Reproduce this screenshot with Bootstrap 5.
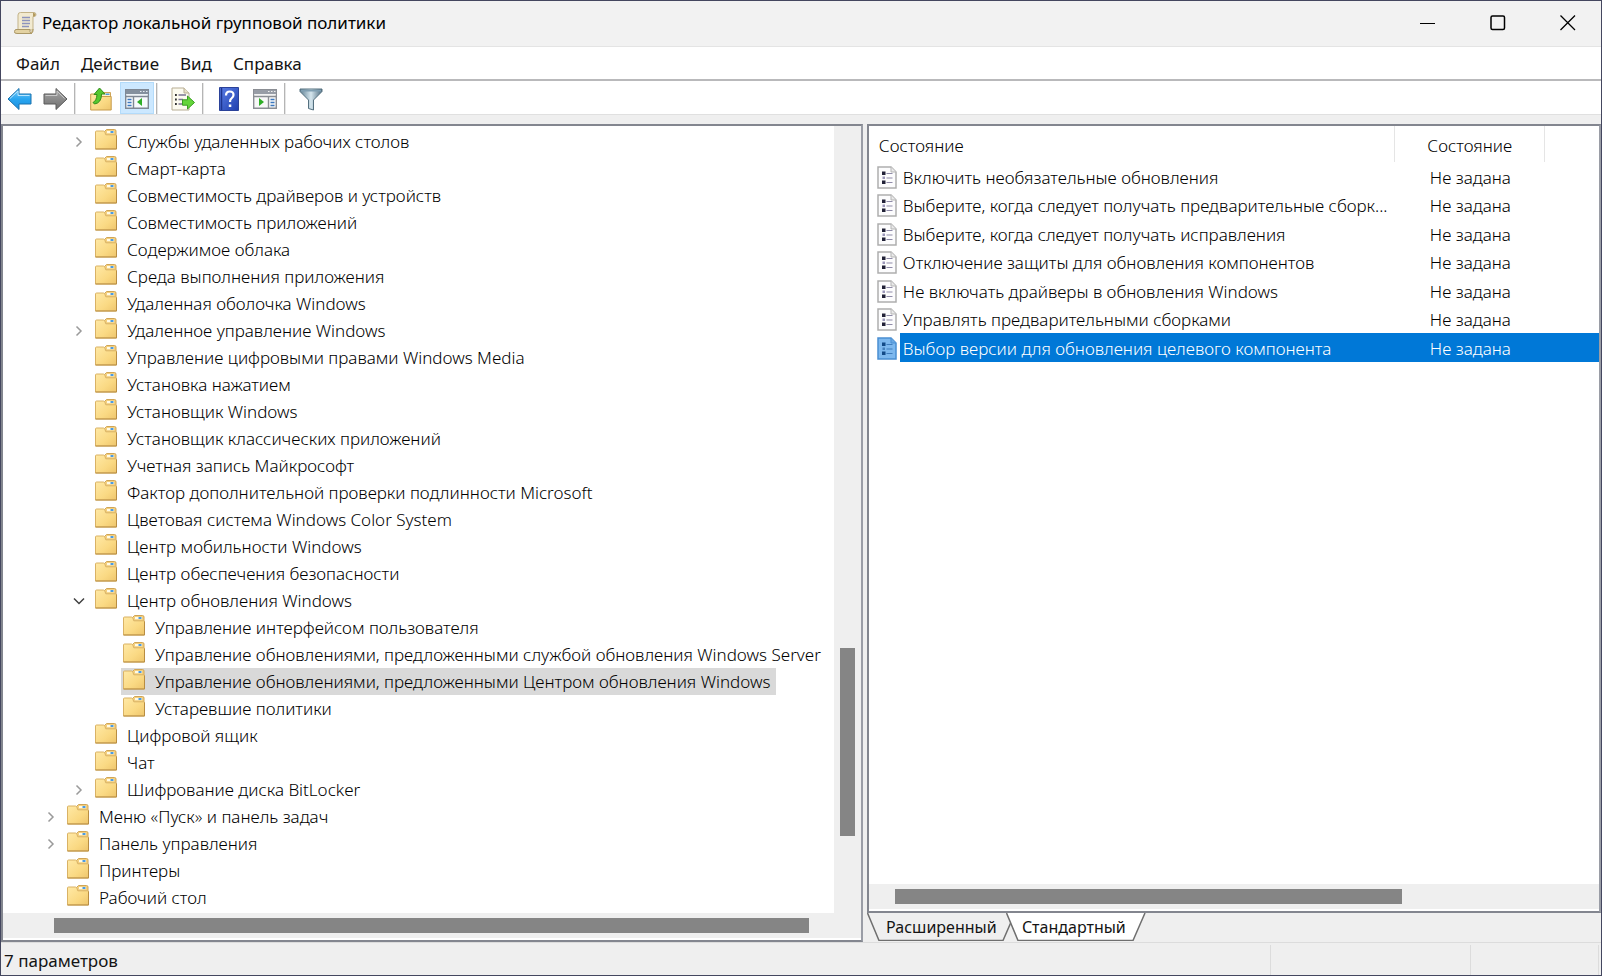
<!DOCTYPE html>
<html lang="ru">
<head>
<meta charset="utf-8">
<meta name="viewport" content="width=device-width, initial-scale=1">
<title>Редактор локальной групповой политики</title>
<link href="https://cdn.jsdelivr.net/npm/bootstrap@5.3.0/dist/css/bootstrap.min.css" rel="stylesheet">
<style>
  body { font-family: "Noto Sans", "Open Sans", sans-serif; font-size: 17px; line-height: 27px; color: #141414; }
  a, a:hover { color: inherit; text-decoration: none; }
  svg { display: block; flex: none; }
  button { border: 0; background: none; padding: 0; color: inherit; }
  .mmc { height: 100vh; background: #efefef; border: 1px solid #44475f; overflow: hidden; }
  .titlebar { height: 46px; background: #f2f2f2; border-bottom: 1px solid #e4e4e4; padding: 0 0 2px 12px; gap: 5px; }
  .titlebar h1 { font-size: 17px; line-height: 27px; font-weight: 400; color: #000; }
  .winbtn { width: 70px; height: 44px; padding-left: 3px; }
  .menubar { height: 34px; padding-left: 15px; gap: 21px; border-bottom: 2px solid #b9b9bb; }
  .tools { height: 34px; padding-left: 1px; gap: 2px; border-bottom: 1px solid #e0e0e0; }
  .tool { width: 34px; height: 32px; padding-top: 2px; display: flex; align-items: center; justify-content: center; }
  .tool.on { background: #cce8ff; border: 1px solid #b3dbfa; }
  .rule { width: 2px; height: 31px; margin-right: 6px; background: #b5b5b5; border-right: 1px solid #e6e6e6; }
  .panes { padding-top: 9px; gap: 4px; }
  .frame { border: 2px solid #83868f; border-color: #83868f #9a9da6 #83868f #83868f; background: #fff; }
  .treepane { flex: 860 1 0; }
  .listpane { flex: 736 1 0; }
  .tree { padding: 2px 0 0 34px; font-weight: 350; color: #000; }
  .tree ul { padding-left: 28px; }
  .tree .item { display: flex; height: 27px; white-space: nowrap; }
  .slot { width: 28px; height: 27px; display: flex; align-items: center; justify-content: center; flex: none; }
  .node { display: flex; align-items: center; gap: 10px; padding: 0 6px 0 2px; }
  .node svg { margin-bottom: 4px; }
  .node.sel { background: #d9d9d9; }
  .track { background: #efefef; }
  .vtrack { width: 27px; padding: 0 6px; }
  .htrack { height: 25px; padding: 5px 0; margin-bottom: 2px; }
  .thumb { background: #858585; }
  .policies { table-layout: fixed; width: 100%; font-weight: 320; color: #000; }
  .policies th { font-weight: 350; height: 36px; padding: 2px 0 0 10px; }
  .policies td { padding: 1px 0 0; height: 28px; line-height: 27px; white-space: nowrap; overflow: hidden; }
  .policies tbody tr:nth-child(odd) td { height: 29px; }
  .policies td:nth-child(1) { padding-left: 8px; }
  .policies td:nth-child(2) { padding-left: 3px; }
  .policies td:nth-child(3) { padding-left: 35px; }
  .policies th:nth-child(2) { padding-left: 32px; }
  .policies th { border-right: 1px solid #e5e5e5; }
  .policies tr.chosen td:nth-child(n+2) { background: #0078d7; color: #fff; }
  .c-icon { width: 31px; } .c-name { width: 495px; } .c-state { width: 150px; }
  .sheets { height: 29px; font-size: 16px; }
  .sheet { height: 28px; position: relative; text-align: center; flex: none; width: 139px; }
  .sheet svg { position: absolute; left: 0; top: 0; }
  .sheet span { position: relative; }
  .sheet.first { padding-left: 10px; }
  .sheet.second { padding-right: 3px; }
  .status { height: 33px; border-top: 1px solid #dcdcdc; line-height: 31px; }
  .status .part { border-right: 1px solid #dcdcdc; margin-top: 2px; }
  .status .part:first-child { padding-left: 3px; }
  .grip { width: 2px; }
</style>
</head>
<body>
<svg width="0" height="0" class="position-absolute" aria-hidden="true">
  <defs>
    <linearGradient id="gf" x1="0" y1="0" x2="1" y2="1"><stop offset="0" stop-color="#ffe9a6"/><stop offset=".6" stop-color="#fad983"/><stop offset="1" stop-color="#eec56c"/></linearGradient>
    <linearGradient id="gb" x1="0" y1="0" x2="0" y2="1"><stop offset="0" stop-color="#7fd0fa"/><stop offset=".5" stop-color="#29a6f0"/><stop offset="1" stop-color="#1b8fe0"/></linearGradient>
    <linearGradient id="gg" x1="0" y1="0" x2="0" y2="1"><stop offset="0" stop-color="#a8a8a8"/><stop offset="1" stop-color="#6e6e6e"/></linearGradient>
    <linearGradient id="gq" x1="0" y1="0" x2="1" y2="1"><stop offset="0" stop-color="#5b7fe6"/><stop offset="1" stop-color="#1f3fae"/></linearGradient>
    <linearGradient id="gn" x1="0" y1="0" x2="1" y2="0"><stop offset="0" stop-color="#5f7f92"/><stop offset=".5" stop-color="#d5e6ee"/><stop offset="1" stop-color="#4e6c80"/></linearGradient>
    <symbol id="folder" viewBox="0 0 22 21">
      <path d="M9.500 5V2.500L11.500.5h8q1.500 0 1.500 1.500v8H9.500z" fill="#f3cf7f" stroke="#d0a556"/>
      <path d="M12 2h7v2.200h-7z" fill="#fffbe8"/><path d="M15.500 2h3v2h-3z" fill="#4c9be0"/>
      <path d="M.5 3q0-1 1-1h7q1 0 1.500 1.500l.8 2.300H20.500q1 0 1 1V20H.5z" fill="url(#gf)" stroke="#d9b265"/>
      <path d="M.5 20h21M21.500 6.500V20" stroke="#b88d42" fill="none"/>
    </symbol>
    <symbol id="closed" viewBox="0 0 8 12"><path d="M1.500 1.500 6 6 1.500 10.500" fill="none" stroke="#9a9a9a" stroke-width="1.500"/></symbol>
    <symbol id="policy" viewBox="0 0 20 23">
      <path d="M1 1h13l5 5v16H1z" fill="#fcfcfd" stroke="#aeaeae" stroke-width="1.500"/>
      <path d="M14 1v5h5" fill="#e9e9e9" stroke="#b5b5b5"/>
      <path d="M5 5.500h3.500V9H5zM5 14.500h3.500V18H5z" fill="#222238"/><path d="M5.500 10.500H8V13H5.500z" fill="#9a96b8"/>
      <path d="M9.500 7.500h6M9.500 12h6M9.500 16.500h6" stroke="#8f8ba8"/>
    </symbol>
  </defs>
</svg>

<div class="mmc d-flex flex-column">
  <header class="titlebar d-flex align-items-center flex-shrink-0">
    <svg width="24" height="24" viewBox="0 0 24 24"><path d="M5 4q0-2.500 2.500-2.500H21q2 0 2 2.300 0 1.700-2 1.700h-1V19H5z" fill="#f2ead0" stroke="#c3b389"/><path d="M20 5.500q2.500.3 2.500-2Q22 1.500 20 2z" fill="#b39a5e"/><path d="M9 6.500h8M9 9.500h8M9 12.500h8M9 15.500h7" stroke="#8d93bd" stroke-width="1.300"/><path d="M3 18.500h14q-1 3.500 2 4H4q-3 0-2.500-2 .3-2 1.500-2z" fill="#e3d2a2" stroke="#ab9868"/><path d="M17 22.500q3.500 0 3-4.500" fill="#cbb67e" stroke="#ab9868"/></svg>
    <h1 class="m-0 me-auto">Редактор локальной групповой политики</h1>
    <div class="d-flex">
      <button class="winbtn" aria-label="Свернуть"><svg class="mx-auto" width="16" height="16"><path d="M0 8.500h15" stroke="#000"/></svg></button>
      <button class="winbtn" aria-label="Развернуть"><svg class="mx-auto" width="16" height="16"><rect x="1" y="1" width="13.500" height="13.500" rx="1.500" fill="none" stroke="#000" stroke-width="1.500"/></svg></button>
      <button class="winbtn" aria-label="Закрыть"><svg class="mx-auto" width="16" height="16"><path d="M.5.5l14.500 14.500M15 .5L.5 15" stroke="#000" stroke-width="1.300"/></svg></button>
    </div>
  </header>

  <nav class="menubar d-flex align-items-center bg-white flex-shrink-0">
    <button>Файл</button><button>Действие</button><button>Вид</button><button>Справка</button>
  </nav>

  <div class="tools d-flex align-items-end bg-white flex-shrink-0" role="toolbar" aria-label="Инструменты">
    <button class="tool" aria-label="Назад"><svg width="25" height="24" viewBox="0 0 25 24"><path d="M1 12 12 1.500V7h12v10H12v5.500z" fill="url(#gb)" stroke="#1a72ae"/><path d="M3 11.500 11 4v4.500h11.500" fill="none" stroke="#b8e6ff"/></svg></button>
    <button class="tool" aria-label="Вперед"><svg width="25" height="24" viewBox="0 0 25 24"><path d="M24 12 13 1.500V7H1v10h12v5.500z" fill="url(#gg)" stroke="#5b5b5b"/><path d="M2.500 8.500H14V4l7.500 7.500" fill="none" stroke="#c9c9c9"/></svg></button>
    <span class="rule"></span>
    <button class="tool" aria-label="Вверх"><svg width="22" height="24" viewBox="0 0 22 24"><path d="M11 8V5.500h9.500V10H11z" fill="#fff3c8" stroke="#d0a556"/><path d="M15.500 6.500h4v1.500h-4z" fill="#4c9be0"/><path d="M.7 7h7l2.500 2.500h11V23H.7z" fill="url(#gf)" stroke="#c79c4c"/><path d="M3 15.500q3.500-1.500 4-8H4L9.500 1l5.500 6h-3.500q0 9-7 10z" fill="#55c82f" stroke="#318d1a"/></svg></button>
    <button class="tool on" aria-label="Дерево консоли"><svg width="24" height="20" viewBox="0 0 24 20"><path d="M.7.7h22.600v18.600H.7z" fill="#f7fafc" stroke="#7f8894" stroke-width="1.400"/><path d="M1 1h22v4H1z" fill="#84909e"/><path d="M15 2.500h1.500M18 2.500h1.500M21 2.500h1.500M1 5.800h22" stroke="#e6edf3"/><path d="M8.500 7v12M1 7.500h22" stroke="#7f8894" stroke-width="1.400"/><path d="M2.500 10.500h4M2.500 13.500h4M2.500 16.500h4" stroke="#3b78c0" stroke-width="1.500"/><path d="M17 9v8l-5-4z" fill="#2fae27"/></svg></button>
    <span class="rule"></span>
    <button class="tool" aria-label="Экспорт списка"><svg width="24" height="24" viewBox="0 0 24 24"><path d="M1 1h12l5 5v17H1z" fill="#fcfaef" stroke="#b7ad94"/><path d="M13 1v5h5" fill="#e8e1c8" stroke="#b7ad94"/><path d="M4 8h1.800M4 12.500h1.800M4 17h1.800" stroke="#333" stroke-width="1.800"/><path d="M7.500 8H15M7.500 12.500H12M7.500 17H12" stroke="#7a7492" stroke-width="1.300"/><path d="M11.500 12.800h5V9l7 6.500-7 6.500v-3.800h-5z" fill="#64d53a" stroke="#3a9d22"/></svg></button>
    <span class="rule"></span>
    <button class="tool" aria-label="Справка"><svg width="20" height="24" viewBox="0 0 20 24"><path d="M.5.5h19v23H.5z" fill="url(#gq)" stroke="#2b4299"/><path d="M2.500 1v22" stroke="#1e358f" stroke-width="1.500"/><path d="M7 8.500q0-4 3.800-4 3.700 0 3.700 3.400 0 2-2 3.400-1.500 1-1.500 3.700" fill="none" stroke="#fff" stroke-width="2.200"/><path d="M9.800 17.500h2.500v2.500H9.800z" fill="#fff"/></svg></button>
    <button class="tool" aria-label="Панель действий"><svg width="24" height="20" viewBox="0 0 24 20"><path d="M.7.7h22.600v18.600H.7z" fill="#f8f8f8" stroke="#8b8e94" stroke-width="1.400"/><path d="M1 1h22v4H1z" fill="#989da6"/><path d="M15 2.500h1.500M18 2.500h1.500M21 2.500h1.500M1 5.800h22" stroke="#f0f0f0"/><path d="M15.500 7v12M1 7.500h22" stroke="#8b8e94" stroke-width="1.400"/><path d="M17.500 10.500h4M17.500 13.500h4M17.500 16.500h4" stroke="#3b78c0" stroke-width="1.500"/><path d="M6 9v8l5-4z" fill="#2fae27"/></svg></button>
    <span class="rule"></span>
    <button class="tool" aria-label="Фильтр"><svg width="24" height="23" viewBox="0 0 24 23"><path d="M1 1h22v2.500L14.500 12v10l-5-1.500V12L1 3.500z" fill="url(#gn)" stroke="#54707f"/><path d="M2 1.800h20v1.700H2z" fill="#7f9fb2"/></svg></button>
  </div>

  <main class="panes d-flex flex-grow-1">
    <section class="treepane frame d-flex flex-column overflow-hidden">
      <div class="d-flex flex-grow-1 overflow-hidden">
        <ul class="tree list-unstyled m-0 flex-grow-1 overflow-hidden">
          <li><ul class="list-unstyled">
            <li class="item"><span class="slot"><svg width="8" height="12"><use href="#closed"/></svg></span><a class="node" href="#"><svg width="22" height="21"><use href="#folder"/></svg>Службы удаленных рабочих столов</a></li>
            <li class="item"><span class="slot"></span><a class="node" href="#"><svg width="22" height="21"><use href="#folder"/></svg>Смарт-карта</a></li>
            <li class="item"><span class="slot"></span><a class="node" href="#"><svg width="22" height="21"><use href="#folder"/></svg>Совместимость драйверов и устройств</a></li>
            <li class="item"><span class="slot"></span><a class="node" href="#"><svg width="22" height="21"><use href="#folder"/></svg>Совместимость приложений</a></li>
            <li class="item"><span class="slot"></span><a class="node" href="#"><svg width="22" height="21"><use href="#folder"/></svg>Содержимое облака</a></li>
            <li class="item"><span class="slot"></span><a class="node" href="#"><svg width="22" height="21"><use href="#folder"/></svg>Среда выполнения приложения</a></li>
            <li class="item"><span class="slot"></span><a class="node" href="#"><svg width="22" height="21"><use href="#folder"/></svg>Удаленная оболочка Windows</a></li>
            <li class="item"><span class="slot"><svg width="8" height="12"><use href="#closed"/></svg></span><a class="node" href="#"><svg width="22" height="21"><use href="#folder"/></svg>Удаленное управление Windows</a></li>
            <li class="item"><span class="slot"></span><a class="node" href="#"><svg width="22" height="21"><use href="#folder"/></svg>Управление цифровыми правами Windows Media</a></li>
            <li class="item"><span class="slot"></span><a class="node" href="#"><svg width="22" height="21"><use href="#folder"/></svg>Установка нажатием</a></li>
            <li class="item"><span class="slot"></span><a class="node" href="#"><svg width="22" height="21"><use href="#folder"/></svg>Установщик Windows</a></li>
            <li class="item"><span class="slot"></span><a class="node" href="#"><svg width="22" height="21"><use href="#folder"/></svg>Установщик классических приложений</a></li>
            <li class="item"><span class="slot"></span><a class="node" href="#"><svg width="22" height="21"><use href="#folder"/></svg>Учетная запись Майкрософт</a></li>
            <li class="item"><span class="slot"></span><a class="node" href="#"><svg width="22" height="21"><use href="#folder"/></svg>Фактор дополнительной проверки подлинности Microsoft</a></li>
            <li class="item"><span class="slot"></span><a class="node" href="#"><svg width="22" height="21"><use href="#folder"/></svg>Цветовая система Windows Color System</a></li>
            <li class="item"><span class="slot"></span><a class="node" href="#"><svg width="22" height="21"><use href="#folder"/></svg>Центр мобильности Windows</a></li>
            <li class="item"><span class="slot"></span><a class="node" href="#"><svg width="22" height="21"><use href="#folder"/></svg>Центр обеспечения безопасности</a></li>
            <li><div class="item"><span class="slot"><svg width="12" height="8" viewBox="0 0 12 8"><path d="M1 1.500 6 6.500 11 1.500" fill="none" stroke="#404040" stroke-width="1.500"/></svg></span><a class="node" href="#"><svg width="22" height="21"><use href="#folder"/></svg>Центр обновления Windows</a></div>
              <ul class="list-unstyled">
                <li class="item"><span class="slot"></span><a class="node" href="#"><svg width="22" height="21"><use href="#folder"/></svg>Управление интерфейсом пользователя</a></li>
                <li class="item"><span class="slot"></span><a class="node" href="#"><svg width="22" height="21"><use href="#folder"/></svg>Управление обновлениями, предложенными службой обновления Windows Server</a></li>
                <li class="item"><span class="slot"></span><a class="node sel" href="#"><svg width="22" height="21"><use href="#folder"/></svg>Управление обновлениями, предложенными Центром обновления Windows</a></li>
                <li class="item"><span class="slot"></span><a class="node" href="#"><svg width="22" height="21"><use href="#folder"/></svg>Устаревшие политики</a></li>
              </ul></li>
            <li class="item"><span class="slot"></span><a class="node" href="#"><svg width="22" height="21"><use href="#folder"/></svg>Цифровой ящик</a></li>
            <li class="item"><span class="slot"></span><a class="node" href="#"><svg width="22" height="21"><use href="#folder"/></svg>Чат</a></li>
            <li class="item"><span class="slot"><svg width="8" height="12"><use href="#closed"/></svg></span><a class="node" href="#"><svg width="22" height="21"><use href="#folder"/></svg>Шифрование диска BitLocker</a></li>
          </ul></li>
          <li class="item"><span class="slot"><svg width="8" height="12"><use href="#closed"/></svg></span><a class="node" href="#"><svg width="22" height="21"><use href="#folder"/></svg>Меню «Пуск» и панель задач</a></li>
          <li class="item"><span class="slot"><svg width="8" height="12"><use href="#closed"/></svg></span><a class="node" href="#"><svg width="22" height="21"><use href="#folder"/></svg>Панель управления</a></li>
          <li class="item"><span class="slot"></span><a class="node" href="#"><svg width="22" height="21"><use href="#folder"/></svg>Принтеры</a></li>
          <li class="item"><span class="slot"></span><a class="node" href="#"><svg width="22" height="21"><use href="#folder"/></svg>Рабочий стол</a></li>
        </ul>
        <div class="track vtrack d-flex flex-column flex-shrink-0"><div style="height:66.300%"></div><div class="thumb" style="height:23.900%"></div></div>
      </div>
      <div class="track htrack d-flex flex-shrink-0"><div style="width:5.900%"></div><div class="thumb" style="width:88%"></div></div>
    </section>

    <section class="listpane d-flex flex-column overflow-hidden">
      <div class="frame d-flex flex-column flex-grow-1">
        <div class="flex-grow-1 overflow-hidden">
          <table class="policies">
            <colgroup><col class="c-icon"><col class="c-name"><col class="c-state"><col></colgroup>
            <thead><tr><th colspan="2" scope="col">Состояние</th><th scope="col">Состояние</th><td></td></tr></thead>
            <tbody>
              <tr><td><svg width="20" height="23"><use href="#policy"/></svg></td><td>Включить необязательные обновления</td><td>Не задана</td><td></td></tr>
              <tr><td><svg width="20" height="23"><use href="#policy"/></svg></td><td>Выберите, когда следует получать предварительные сборк...</td><td>Не задана</td><td></td></tr>
              <tr><td><svg width="20" height="23"><use href="#policy"/></svg></td><td>Выберите, когда следует получать исправления</td><td>Не задана</td><td></td></tr>
              <tr><td><svg width="20" height="23"><use href="#policy"/></svg></td><td>Отключение защиты для обновления компонентов</td><td>Не задана</td><td></td></tr>
              <tr><td><svg width="20" height="23"><use href="#policy"/></svg></td><td>Не включать драйверы в обновления Windows</td><td>Не задана</td><td></td></tr>
              <tr><td><svg width="20" height="23"><use href="#policy"/></svg></td><td>Управлять предварительными сборками</td><td>Не задана</td><td></td></tr>
              <tr class="chosen"><td><svg width="20" height="23" viewBox="0 0 20 23"><path d="M1 1h13l5 5v16H1z" fill="#7db8ee" stroke="#4a8fd2" stroke-width="1.500"/><path d="M14 1v5h5" fill="#6aa9e4" stroke="#4a8fd2"/><path d="M5 5.500h3.500V9H5zM5 14.500h3.500V18H5z" fill="#134a87"/><path d="M5.500 10.500H8V13H5.500z" fill="#4480bd"/><path d="M9.500 7.500h6M9.500 12h6M9.500 16.500h6" stroke="#3f7dbd"/></svg></td><td>Выбор версии для обновления целевого компонента</td><td>Не задана</td><td></td></tr>
            </tbody>
          </table>
        </div>
        <div class="track htrack d-flex flex-shrink-0"><div style="width:3.600%"></div><div class="thumb" style="width:69.400%"></div></div>
      </div>
      <div class="sheets d-flex flex-shrink-0">
        <button class="sheet first"><svg width="150" height="28"><path d="M.5 0 12 27.500H136L148 0" fill="#efefef" stroke="#6f6f6f" stroke-width="1.500"/></svg><span>Расширенный</span></button>
        <button class="sheet second"><svg width="140" height="28"><path d="M.5 0 12 27.500H127L139 0" fill="#fff" stroke="#6f6f6f" stroke-width="1.500"/></svg><span>Стандартный</span></button>
      </div>
    </section>
  </main>

  <footer class="status d-flex flex-shrink-0">
    <div class="part flex-grow-1">7 параметров</div>
    <div class="part" style="width:12.500%"></div>
    <div class="part" style="width:8%"></div>
    <div class="grip"></div>
  </footer>
</div>
<script src="https://cdn.jsdelivr.net/npm/bootstrap@5.3.0/dist/js/bootstrap.bundle.min.js"></script>
</body>
</html>
